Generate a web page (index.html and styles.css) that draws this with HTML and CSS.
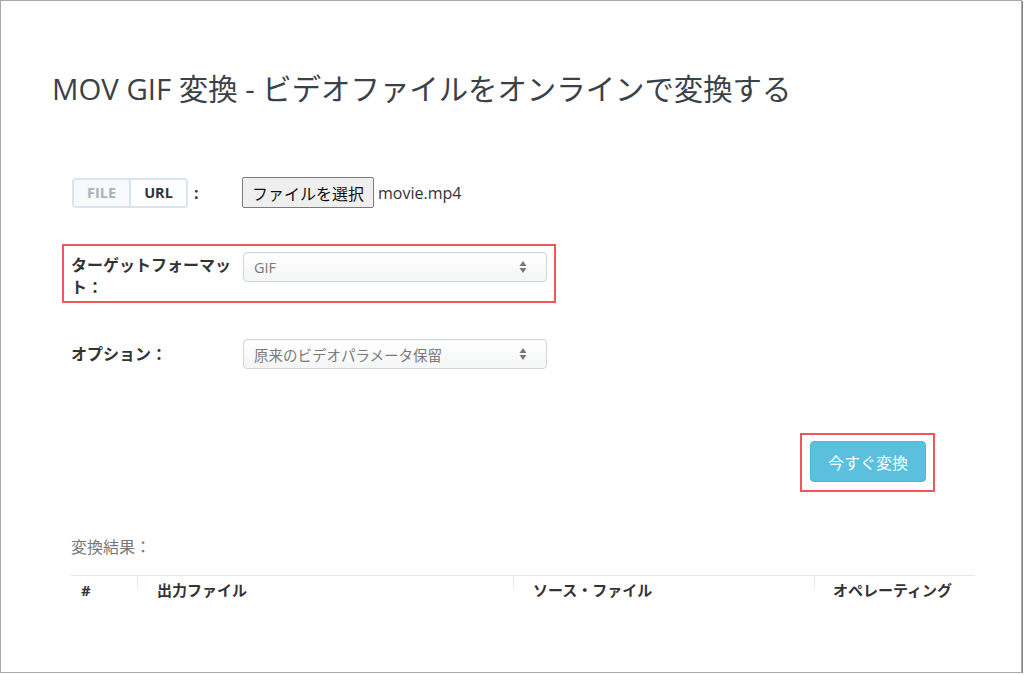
FILE: index.html
```html
<!DOCTYPE html>
<html>
<head>
 <meta charset="utf-8">
 <title>MOV GIF 変換</title>
 <link rel="stylesheet" href="styles.css">
</head>
<body>
 <div class="frame">
 <h1>MOV GIF 変換 - ビデオファイルをオンラインで変換する</h1>

 <div class="row row-file">
 <div class="label-col">
 <div class="toggle">
 <span class="toggle-item off">FILE</span>
 <span class="toggle-item on">URL</span>
 </div>
 <span class="colon">:</span>
 </div>
 <div class="file-pick">
 <button type="button" class="file-btn">ファイルを選択</button>
 <span class="file-name">movie.mp4</span>
 </div>
 </div>

 <div class="row row-target highlight">
 <div class="label-col label">ターゲットフォーマット：</div>
 <div class="select">
 <span>GIF</span>
 <svg width="8" height="14" viewBox="0 0 8 14"><path d="M4 1 L7.5 6 L0.5 6 Z M4 13 L7.5 8 L0.5 8 Z" fill="#777"/></svg>
 </div>
 </div>

 <div class="row row-option">
 <div class="label-col label">オプション：</div>
 <div class="select">
 <span>原来のビデオパラメータ保留</span>
 <svg width="8" height="14" viewBox="0 0 8 14"><path d="M4 1 L7.5 6 L0.5 6 Z M4 13 L7.5 8 L0.5 8 Z" fill="#777"/></svg>
 </div>
 </div>

 <div class="convert-row">
 <div class="highlight convert-box">
 <button type="button" class="convert-btn">今すぐ変換</button>
 </div>
 </div>

 <div class="result-title">変換結果：</div>

 <table class="results">
 <thead>
 <tr>
 <th class="c-num">#</th>
 <th class="c-out">出力ファイル</th>
 <th class="c-src">ソース・ファイル</th>
 <th class="c-op">オペレーティング</th>
 </tr>
 </thead>
 </table>
 </div>
</body>
</html>
```

FILE: styles.css
```css
/* page frame */
body {
margin: 0;
background: #fff;
font-family: "Open Sans", "Noto Sans CJK JP", sans-serif;
color: #333;
}
.frame {
height: 671px;
border: 1px solid #a8a8a8;
box-shadow: 1px 1px 0 #888;
box-sizing: content-box;
padding: 0 0 0 70px;
width: 950px;
overflow: hidden;
}
h1 {
margin: 68px 0 0 -19px;
font-size: 29.4px;
line-height: 40px;
font-weight: 400;
color: #3b4148;
white-space: nowrap;
}

/* form rows */
.row {
display: flex;
align-items: center;
width: 476px;
}
.label-col {
width: 172px;
flex-shrink: 0;
display: flex;
align-items: center;
}
.label {
font-size: 16px;
line-height: 22px;
font-weight: bold;
color: #333;
}
.row-file {
margin-top: 68px;
height: 31px;
}
.row-target {
margin-top: 36px;
margin-left: -9px;
padding: 6px 7px 3px 7px;
align-items: flex-start;
}
.row-target .label {
padding-top: 2px;
}
.row-option {
margin-top: 36px;
}
.highlight {
border: 2px solid #f2565b;
}

/* FILE / URL toggle */
.toggle {
display: flex;
margin-left: 1px;
border: 2px solid #dbe4ee;
border-radius: 4px;
height: 26px;
}
.toggle-item {
width: 55px;
text-align: center;
font-size: 14.5px;
font-weight: bold;
line-height: 26px;
}
.toggle-item.off {
color: #a8b2bf;
background: #f7f9fb;
border-right: 2px solid #dbe4ee;
}
.toggle-item.on {
color: #2f353b;
}
.colon {
margin-left: 6px;
font-weight: bold;
font-size: 16px;
}

/* file chooser */
.file-pick {
display: flex;
align-items: center;
margin-left: -1px;
}
.file-btn {
height: 31px;
padding: 0 9px;
font-family: "Noto Sans CJK JP", sans-serif;
font-size: 16px;
color: #111;
background: #efefef;
border: 1px solid #7a7a7a;
border-radius: 2px;
}
.file-name {
margin-left: 4px;
font-size: 16px;
color: #333;
}

/* select boxes */
.select {
width: 304px;
height: 30px;
box-sizing: border-box;
display: flex;
align-items: center;
justify-content: space-between;
padding: 0 19px 0 10px;
border: 1px solid #cbd6e1;
border-radius: 4px;
background: linear-gradient(#fff, #f4f5f6);
box-shadow: inset 0 1px 1px rgba(0,0,0,0.03);
font-size: 14.5px;
color: #7a7a7a;
}

/* convert button */
.convert-row {
display: flex;
justify-content: flex-end;
width: 864px;
margin-top: 64px;
}
.convert-box {
padding: 6px 7px 8px 8px;
}
.convert-btn {
display: block;
width: 116px;
height: 41px;
border: 1px solid #4fb6d6;
border-radius: 4px;
background: #5bc0de;
color: #fff;
font-family: "Noto Sans CJK JP", sans-serif;
font-size: 16px;
}

/* results */
.result-title {
margin-top: 44px;
font-size: 16px;
line-height: 22px;
color: #777;
}
.results {
margin-top: 17px;
width: 904px;
border-collapse: collapse;
border-top: 1px solid #e4e9ef;
}
.results th {
position: relative;
text-align: left;
font-size: 15px;
line-height: 20px;
font-weight: bold;
color: #333;
padding: 4px 0 0 20px;
}
.results th + th::before {
content: "";
position: absolute;
left: 0;
top: 0;
height: 13px;
border-left: 1px solid #e4e9ef;
}
.results .c-num {
width: 56px;
padding-left: 10px;
}
.results .c-out {
width: 356px;
}
.results .c-src {
width: 281px;
}
.results .c-op {
padding-left: 19px;
}
```
